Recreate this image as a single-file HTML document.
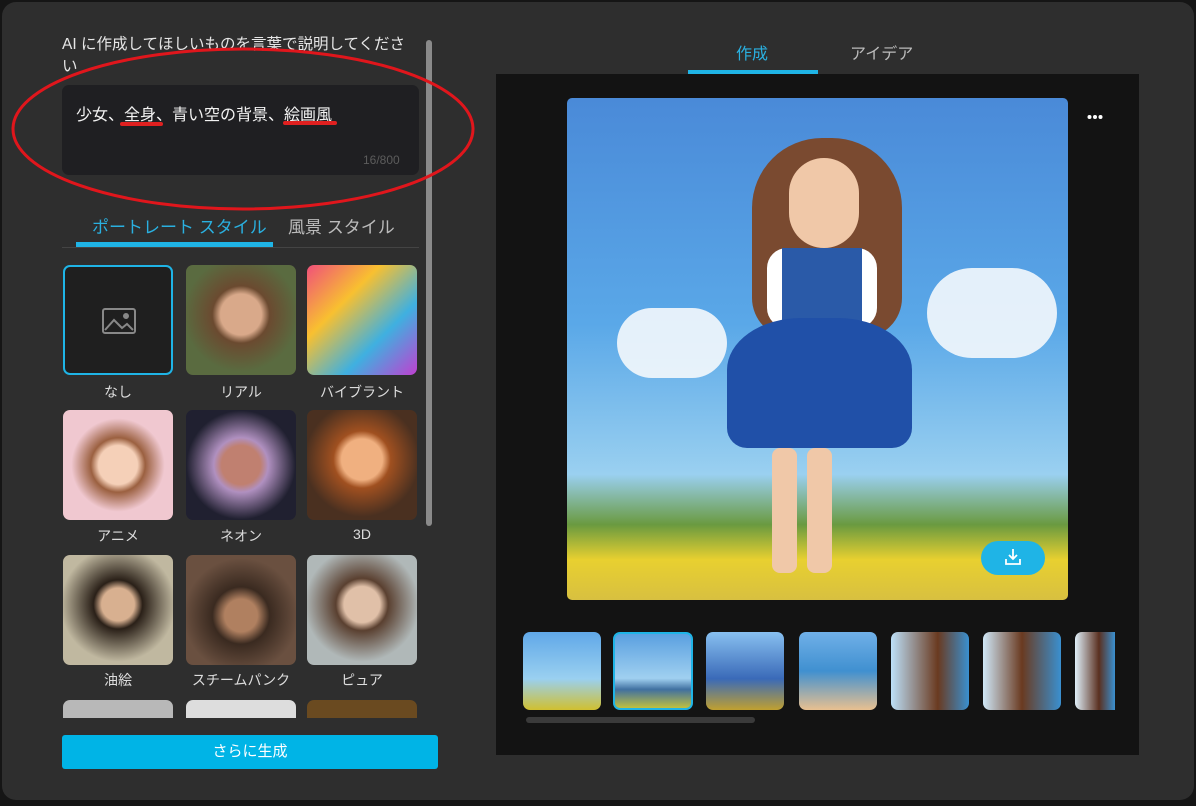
<!DOCTYPE html><html><head><meta charset="utf-8"><style>
*{margin:0;padding:0;box-sizing:border-box}
body{width:1196px;height:806px;background:#151515;font-family:"Liberation Sans","Noto Sans CJK JP",sans-serif;position:relative;overflow:hidden;color:#ddd}
.panel{position:absolute;left:2px;top:2px;width:1192px;height:798px;background:#2e2e2e;border-radius:14px}
.a{position:absolute}
.cell{position:absolute;width:110px;height:110px;border-radius:7px;overflow:hidden}
.lbl{position:absolute;width:120px;text-align:center;font-size:14px;color:#ddd}
.th{position:absolute;top:632px;width:78px;height:78px;border-radius:7px;overflow:hidden}
</style></head><body>
<div class="panel"></div>
<div class="a" style="left:62px;top:34px;font-size:15.5px;line-height:22px;width:352px;color:#e6e6e6">AI に作成してほしいものを言葉で説明してください</div>
<div class="a" style="left:426px;top:40px;width:6px;height:486px;background:#8a8a8a;border-radius:3px"></div>
<div class="a" style="left:62px;top:85px;width:357px;height:90px;background:#1f1f22;border-radius:7px"></div>
<div class="a" style="left:76px;top:101px;font-size:16px;color:#f2f2f2">少女、全身、青い空の背景、絵画風</div>
<div class="a" style="left:120px;top:122px;width:43px;height:4px;background:#e02020;border-radius:2px"></div>
<div class="a" style="left:283px;top:121px;width:54px;height:4px;background:#e02020;border-radius:2px"></div>
<div class="a" style="left:363px;top:153px;font-size:12px;color:#5c5c5c">16/800</div>
<div class="a" style="left:92px;top:213px;font-size:17px;color:#2ab0e0">ポートレート スタイル</div>
<div class="a" style="left:288px;top:213px;font-size:17px;color:#bbb">風景 スタイル</div>
<div class="a" style="left:62px;top:247px;width:357px;height:1px;background:#444"></div>
<div class="a" style="left:76px;top:242px;width:197px;height:5px;background:#1fb4e6"></div>
<svg class="a" style="left:0;top:0" width="480" height="260"><ellipse cx="243" cy="129" rx="230" ry="80" fill="none" stroke="#e0161c" stroke-width="3"/></svg>
<div class="cell" style="left:63px;top:265px;background:#1f1f1f;border:2px solid #1fb4e6"></div>
<svg class="a" style="left:102px;top:308px" width="34" height="26"><rect x="1" y="1" width="32" height="24" rx="2" fill="none" stroke="#888" stroke-width="2"/><circle cx="24" cy="8" r="3" fill="#888"/><path d="M3 22 L12 12 L20 20 L25 16 L31 22" fill="none" stroke="#888" stroke-width="2"/></svg>
<div class="cell" style="left:186px;top:265px;background:radial-gradient(circle at 50% 45%,#d9a98a 0 25%,#6b4a30 35%,#5a6b40 70%)"></div>
<div class="cell" style="left:307px;top:265px;background:linear-gradient(135deg,#f0507a,#f8c030,#3fb0e0,#c040d0)"></div>
<div class="cell" style="left:63px;top:410px;background:radial-gradient(circle at 50% 50%,#f5d0b8 0 25%,#9b6040 35%,#f0c8d0 60%)"></div>
<div class="cell" style="left:186px;top:410px;background:radial-gradient(circle at 50% 50%,#c08070 0 25%,#b090c0 35%,#202030 70%)"></div>
<div class="cell" style="left:307px;top:410px;background:radial-gradient(circle at 50% 45%,#f0b080 0 25%,#a05020 35%,#4a3020 70%)"></div>
<div class="cell" style="left:63px;top:555px;background:radial-gradient(circle at 50% 45%,#d8b090 0 20%,#2a2018 30%,#c0b8a0 70%)"></div>
<div class="cell" style="left:186px;top:555px;background:radial-gradient(circle at 50% 55%,#b08060 0 20%,#3a2a20 35%,#6a5040 70%)"></div>
<div class="cell" style="left:307px;top:555px;background:radial-gradient(circle at 50% 45%,#e0c0a8 0 22%,#5a4030 32%,#b0b8b8 70%)"></div>
<div class="a" style="left:63px;top:700px;width:110px;height:18px;background:#b8b8b8;border-radius:7px 7px 0 0"></div>
<div class="a" style="left:186px;top:700px;width:110px;height:18px;background:#ddd;border-radius:7px 7px 0 0"></div>
<div class="a" style="left:307px;top:700px;width:110px;height:18px;background:#6a4a20;border-radius:7px 7px 0 0"></div>
<div class="lbl" style="left:58px;top:382px">なし</div><div class="lbl" style="left:181px;top:382px">リアル</div><div class="lbl" style="left:302px;top:382px">バイブラント</div>
<div class="lbl" style="left:58px;top:526px">アニメ</div><div class="lbl" style="left:181px;top:526px">ネオン</div><div class="lbl" style="left:302px;top:526px">3D</div>
<div class="lbl" style="left:58px;top:670px">油絵</div><div class="lbl" style="left:181px;top:670px">スチームパンク</div><div class="lbl" style="left:302px;top:670px">ピュア</div>
<div class="a" style="left:62px;top:735px;width:376px;height:34px;background:#00b4e6;border-radius:3px;text-align:center;line-height:34px;font-size:15px;color:#fff">さらに生成</div>
<div class="a" style="left:736px;top:40px;font-size:16px;color:#2ab0e0">作成</div>
<div class="a" style="left:850px;top:40px;font-size:16px;color:#bbb">アイデア</div>
<div class="a" style="left:688px;top:70px;width:130px;height:4px;background:#1fb4e6"></div>
<div class="a" style="left:496px;top:74px;width:643px;height:681px;background:#131313"></div>
<svg class="a" style="left:1087px;top:114px" width="16" height="6"><circle cx="2.5" cy="3" r="2" fill="#fff"/><circle cx="8" cy="3" r="2" fill="#fff"/><circle cx="13.5" cy="3" r="2" fill="#fff"/></svg>
<div class="a" style="left:567px;top:98px;width:501px;height:502px;border-radius:5px;overflow:hidden;background:linear-gradient(180deg,#4a8ad8 0%,#5aa8e8 45%,#9ad0f0 75%,#6a9a40 85%,#e8d030 92%,#d8c040 100%)">
<div class="a" style="left:50px;top:210px;width:110px;height:70px;background:#f4f8fc;border-radius:40px;opacity:.9"></div>
<div class="a" style="left:360px;top:170px;width:130px;height:90px;background:#f4f8fc;border-radius:50px;opacity:.9"></div>
<div class="a" style="left:185px;top:40px;width:150px;height:200px;background:#7a4a30;border-radius:70px 70px 40px 40px"></div>
<div class="a" style="left:222px;top:60px;width:70px;height:90px;background:#f0c8a8;border-radius:35px"></div>
<div class="a" style="left:200px;top:150px;width:110px;height:80px;background:#ffffff;border-radius:20px"></div>
<div class="a" style="left:215px;top:150px;width:80px;height:80px;background:#2a5aa8"></div>
<div class="a" style="left:160px;top:220px;width:185px;height:130px;background:#2050a8;border-radius:40% 40% 20px 20px"></div>
<div class="a" style="left:205px;top:350px;width:25px;height:125px;background:#f0c8a8;border-radius:8px"></div>
<div class="a" style="left:240px;top:350px;width:25px;height:125px;background:#f0c8a8;border-radius:8px"></div>
<div class="a" style="left:414px;top:443px;width:64px;height:34px;background:#1fb4e6;border-radius:17px"></div>
<svg class="a" style="left:436px;top:449px" width="20" height="20"><path d="M10 2v10M6 8l4 4 4-4M3 12v5h14v-5" fill="none" stroke="#fff" stroke-width="1.8"/></svg>
</div>
<div class="th" style="left:523px;background:linear-gradient(180deg,#60a8e8,#9ad0f0 60%,#d0c030)"></div>
<div class="th" style="left:613px;width:80px;border:2px solid #1fb4e6;background:linear-gradient(180deg,#5aa0e0,#a0d0f0 60%,#4070a0 75%,#c0c040)"></div>
<div class="th" style="left:706px;background:linear-gradient(180deg,#88c0f0,#3a6ab8 60%,#c0a030)"></div>
<div class="th" style="left:799px;background:linear-gradient(180deg,#70b0e8,#4090d0 50%,#e8c090)"></div>
<div class="th" style="left:891px;background:linear-gradient(90deg,#bde0f8,#6a3a20 60%,#3a90d0)"></div>
<div class="th" style="left:983px;background:linear-gradient(90deg,#d0e8f8,#6a3a20 50%,#3a90d0)"></div>
<div class="th" style="left:1075px;width:40px;border-radius:7px 0 0 7px;background:linear-gradient(90deg,#e0f0fa,#5a3020 60%,#3a90d0)"></div>
<div class="a" style="left:526px;top:717px;width:229px;height:6px;background:#3a3a3a;border-radius:3px"></div>
</body></html>
